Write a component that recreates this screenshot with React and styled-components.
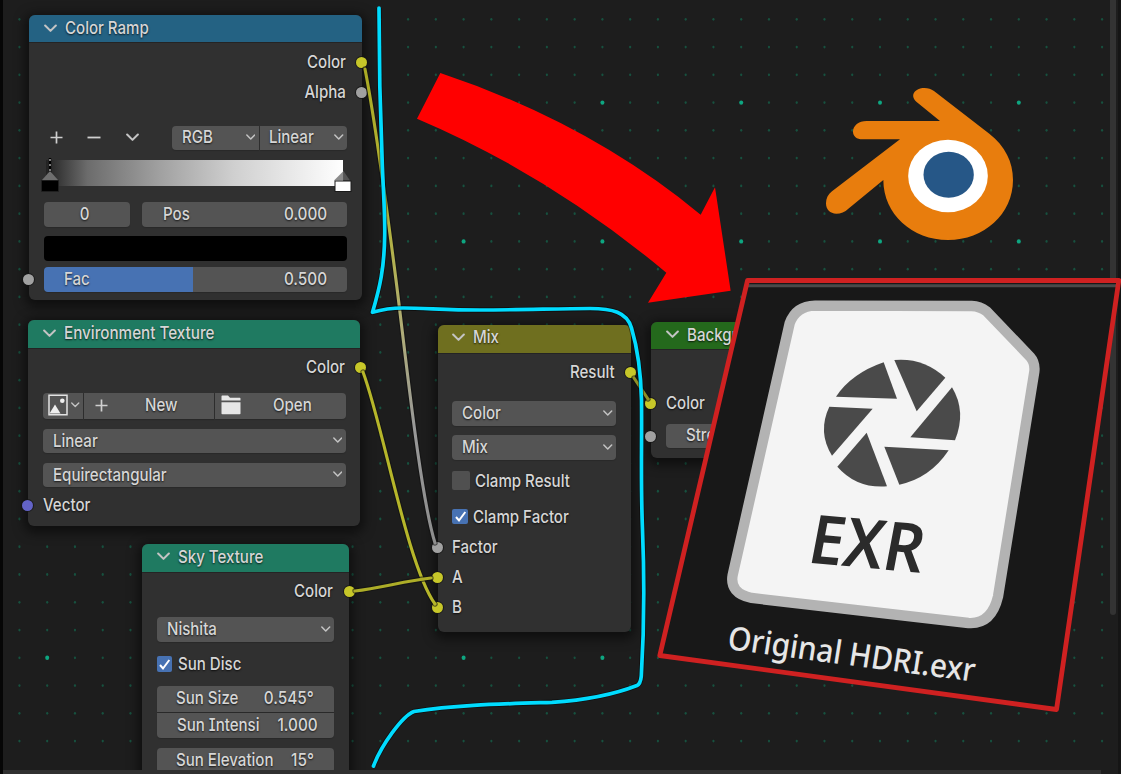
import React from "react";
import styled, { createGlobalStyle, css } from "styled-components";

const GlobalStyle = createGlobalStyle`
  * { box-sizing: border-box; }
  html, body { margin: 0; padding: 0; background: #1d1d1d; overflow: hidden; }
`;

const Editor = styled.main`
  position: relative;
  width: 1121px;
  height: 774px;
  overflow: hidden;
  background: #1d1d1d;
  font-family: Inter, "Liberation Sans", sans-serif;
  font-size: 17.4px;
  font-weight: 500;
  line-height: 24px;
  color: #d6d6d6;
`;

const Layer = styled.svg`
  position: absolute;
  inset: 0;
  width: 1121px;
  height: 774px;
  pointer-events: none;
`;

const Node = styled.section`
  position: absolute;
  left: ${(p) => p.$x}px;
  top: ${(p) => p.$y}px;
  width: ${(p) => p.$w}px;
  height: ${(p) => p.$h}px;
  border-radius: 6px;
  background: #303030;
  box-shadow: 0 3px 11px 4px rgba(0, 0, 0, 0.5);
`;

const Header = styled.header`
  display: flex;
  align-items: center;
  gap: ${(p) => p.$gap ?? 8}px;
  height: ${(p) => p.$h ?? 27}px;
  padding: 0 0 ${(p) => p.$lift ?? 1}px 14.5px;
  border-radius: 6px 6px 0 0;
  background: ${(p) => p.$color};
  box-shadow: 0 1px 0 rgba(0, 0, 0, 0.25);
`;

const Body = styled.div`
  display: flex;
  flex-direction: column;
  padding: ${(p) => p.$top}px 14.5px 0;
`;

const Text = styled.span`
  display: inline-block;
  white-space: nowrap;
  transform: scaleX(${(p) => p.$sx ?? 0.866});
  transform-origin: ${(p) => p.$from ?? "left"} center;
  font-feature-settings: "cv08" 1;
  text-shadow: 0 1px 2px rgba(0, 0, 0, 0.75);
`;

const Row = styled.div`
  display: flex;
  align-items: center;
  position: relative;
  justify-content: ${(p) => (p.$end ? "flex-end" : "flex-start")};
  height: ${(p) => p.$h ?? 30}px;
  margin-top: ${(p) => p.$mt ?? 0}px;
  padding-right: ${(p) => (p.$end ? 1.3 : 0)}px;
  gap: ${(p) => p.$gap ?? 0}px;
`;

const socketColors = { color: "#c7c729", value: "#a1a1a1", vector: "#6363c7" };

const Socket = styled.i`
  position: absolute;
  ${(p) => (p.$side === "right" ? css`right: -20.4px;` : css`left: -20.6px;`)}
  top: calc(50% - 4.8px);
  width: 11px;
  height: 11px;
  border-radius: 50%;
  background: ${(p) => socketColors[p.$kind]};
  box-shadow: 0 0 0 1px rgba(20, 20, 20, 0.75);
`;

const Field = styled.div`
  display: flex;
  align-items: center;
  position: relative;
  justify-content: ${(p) => (p.$center ? "center" : "space-between")};
  flex: ${(p) => p.$flex ?? "1 1 0"};
  height: 100%;
  padding: 0 ${(p) => p.$pr ?? 3}px 1px ${(p) => p.$pl ?? 10}px;
  border-radius: ${(p) => p.$radius ?? "4px"};
  background: ${(p) => p.$bg ?? "#545454"};
  box-shadow: 0 1px 1px rgba(0, 0, 0, 0.15);
`;

const RampControls = styled.div`
  display: flex;
  align-items: center;
  justify-content: space-between;
  width: 128.5px;
  padding: 0 33px 0 6px;
`;

const RampBar = styled.div`
  position: relative;
  height: 26px;
  margin: 10px 4px 0 2px;
  background: linear-gradient(90deg, #222 0%, #3c3c3c 5%, #6c6c6c 14%, #a0a0a0 38%, #cfcfcf 63%, #fff 100%);
`;

const Handles = styled.svg`
  position: absolute;
  left: -5px;
  top: -4px;
  width: 314px;
  height: 40px;
`;

const Swatch = styled.div`
  height: 24.5px;
  margin-top: 9px;
  border-radius: 4px;
  background: #000;
`;

const Stack = styled.div`
  display: flex;
  flex-direction: column;
  gap: 1px;
  height: ${(p) => p.$h}px;
  margin-top: ${(p) => p.$mt}px;
`;

const Check = styled.span`
  display: grid;
  place-items: center;
  width: ${(p) => (p.$on ? 15.5 : 18)}px;
  height: ${(p) => (p.$on ? 15.5 : 18.5)}px;
  border-radius: 2px;
  background: ${(p) => (p.$on ? "#4772b3" : "#505050")};
`;

const VScroll = styled.div`
  position: absolute;
  right: 5px;
  top: 0;
  width: 6px;
  height: 615px;
  border-radius: 0 0 3px 3px;
  background: #333;
`;

const RightEdge = styled.div`
  position: absolute;
  right: 0;
  top: 0;
  width: 3px;
  height: 100%;
  background: #151515;
`;

const HScroll = styled.div`
  position: absolute;
  left: 3px;
  bottom: 0;
  width: 1098px;
  height: 4px;
  background: #303030;
`;

const LeftEdge = styled.div`
  position: absolute;
  left: 0;
  top: 0;
  width: 2.5px;
  height: 100%;
  background: #060606;
`;

const Chevron = ({ w = 12 }) => (
  <svg width={w} height={w * 0.66} viewBox="0 0 12 8" fill="none">
    <path d="M1 1.4 L6 6.4 L11 1.4" stroke="#c4c4c4" strokeWidth="1.9" strokeLinecap="round" strokeLinejoin="round" />
  </svg>
);

const Plus = () => (
  <svg width="13" height="13" viewBox="0 0 13 13">
    <path d="M6.5 0.5V12.5M0.5 6.5H12.5" stroke="#cfcfcf" strokeWidth="1.7" />
  </svg>
);

const Minus = () => (
  <svg width="14" height="13" viewBox="0 0 14 13">
    <path d="M0.5 6.5H13.5" stroke="#cfcfcf" strokeWidth="1.8" />
  </svg>
);

const ImageIcon = () => (
  <svg width="20" height="22" viewBox="0 0 20 22">
    <path d="M1 1.2H19V20.8H1Z" fill="none" stroke="#e2e2e2" strokeWidth="1.5" />
    <path d="M1.5 19.5L7 10.5L12.5 19.5Z" fill="#eee" />
    <circle cx="14.3" cy="6.8" r="2.3" fill="#eee" />
  </svg>
);

const FolderIcon = () => (
  <svg width="20" height="20" viewBox="0 0 20 20">
    <path d="M0.5 1.2Q0.5 0.5 1.2 0.5H7L9 2.7H18.8Q19.5 2.7 19.5 3.4V5.6H0.5Z" fill="#e6e6e6" />
    <path d="M0.5 7.2H19.5V18.5Q19.5 19.3 18.7 19.3H1.3Q0.5 19.3 0.5 18.5Z" fill="#e6e6e6" />
  </svg>
);

const Tick = () => (
  <svg width="13" height="13" viewBox="0 0 13 13" fill="none">
    <path d="M2 7L5 10.5L11.3 2" stroke="#fff" strokeWidth="2" />
  </svg>
);

const Select = ({ label, ...rest }) => (
  <Field $pr={3.5} {...rest}>
    <Text>{label}</Text>
    <Chevron w={9.5} />
  </Field>
);

const Output = ({ label, kind, ...rest }) => (
  <Row $end {...rest}>
    <Text $from="right">{label}</Text>
    <Socket $side="right" $kind={kind} />
  </Row>
);

const STEP = 27.76;
const Dots = () => {
  const dots = [];
  for (let i = -16; i <= 23; i++) {
    for (let j = -3; j <= 23; j++) {
      const major = i % 5 === 0 && j % 5 === 0;
      dots.push(
        <ellipse
          key={`${i}:${j}`}
          cx={463.6 + i * STEP}
          cy={102.6 + j * STEP}
          rx={major ? 2 : 1.1}
          ry={major ? 2.2 : 1.4}
          fill={major ? "#0ea681" : "#17513f"}
        />
      );
    }
  }
  return <Layer>{dots}</Layer>;
};

const Link = ({ d, stroke }) => (
  <g fill="none" strokeLinecap="round">
    <path d={d} stroke="#111" strokeOpacity="0.6" strokeWidth="5.4" />
    <path d={d} stroke={stroke} strokeWidth="3.1" />
  </g>
);

const Links = () => (
  <Layer>
    <defs>
      <linearGradient id="link" gradientUnits="userSpaceOnUse" x1="0" y1="68" x2="0" y2="545">
        <stop offset="0" stopColor="#aaaa24" />
        <stop offset="0.3" stopColor="#b3b336" />
        <stop offset="0.55" stopColor="#b0ad78" />
        <stop offset="0.75" stopColor="#999" />
        <stop offset="1" stopColor="#8d8d8d" />
      </linearGradient>
    </defs>
    <Link d="M365 69C375 120 387 210 396 280S420 495 435 543" stroke="url(#link)" />
    <Link d="M363 372C383 425 407 565 435 604" stroke="#b6b62a" />
    <Link d="M355 591C380 588 405 581 431 578" stroke="#adad28" />
    <Link d="M634 378L648 399" stroke="#8f8f26" />
  </Layer>
);

const BRACKET =
  "M379 8C379 60 380 110 382.3 165C383.5 195 385 212 384.7 235C384.3 268 380 287 372.5 312.3C382 309.5 390 308 403 308C425 308 445 310 480 310C520 310 560 308.5 590 308.5C612 308.6 627 312 631.5 328C638 350 641 378 641.5 400C642 450 640.5 480 642.5 530C644.5 580 643.5 640 641.3 676Q640.5 684 637 685.5C610 696 580 700.5 552 702.3C500 704 455 705 414 711.5C402 716 381 746 373.5 766";

const Annotations = () => (
  <Layer>
    <g fill="none" strokeLinejoin="round">
      <path d={BRACKET} stroke="#000" strokeOpacity="0.45" strokeWidth="5.4" />
      <path d={BRACKET} stroke="#00dcff" strokeWidth="3.7" strokeLinecap="round" />
    </g>
    <g transform="translate(400 50) scale(0.33333)">
      <path d="M121 69Q568 218 902 494L945 412L992 722L744 758L799 668Q445 373 51 206Z" fill="#f00" />
    </g>
    <g transform="translate(800 70) scale(0.33333)">
      <path
        d="M420 153L349 95C328 76 345 54 373 54C385 54 393 57 402 63L568 191C615 228 639 275 639 330C639 432 552 510 444 510C336 510 250 432 250 330L145 416C135 426 122 431 109 431C90 431 78 418 78 400C78 385 84 374 96 364L300 208H188C170 208 159 198 159 185C159 167 176 153 200 153Z"
        fill="#e87d0d"
      />
      <ellipse cx="444" cy="318" rx="119.5" ry="109" fill="#fff" />
      <ellipse cx="446" cy="314" rx="75.5" ry="69" fill="#265787" />
    </g>
  </Layer>
);

const FileCard = () => (
  <Layer>
    <path d="M747.5 280.5H1118.8L1056.5 709.5L659.8 655.5Z" fill="#181818" />
    <path d="M748 285.8H1117" stroke="#494949" strokeWidth="3" />
    <path d="M747.5 280.5H1118.8L1056.5 709.5L659.8 655.5Z" fill="none" stroke="#cf2121" strokeWidth="4.8" strokeLinejoin="round" />
    <g transform="translate(700 270) scale(0.33333)">
      <path
        d="M345 107L815 108Q840 109 860 124L990 260Q1006 278 1003 305L894 980Q874 1064 805 1059L155 984Q88 970 98 915L269 160Q288 108 345 107Z"
        fill="#f4f4f4"
        stroke="#b3b3b3"
        strokeWidth="31"
      />
      <g fill="#4a4a4a">
        <path d="M551 277L591 386L408 380Q455 310 551 277Z" />
        <path d="M583 270Q670 262 736 323L650 424Z" />
        <path d="M756 352Q800 425 765 511L631 502Z" />
        <path d="M553 530L746 541Q690 625 598 644Z" />
        <path d="M500 488L561 649Q470 656 412 590Z" />
        <path d="M388 410L518 416L396 557Q352 485 388 410Z" />
      </g>
    </g>
    <text
      transform="matrix(1 0.09 -0.19 1 806 562.5)"
      x="0"
      y="0"
      fontFamily='"Noto Sans", sans-serif'
      fontWeight="600"
      fontSize="67"
      textLength="114"
      lengthAdjust="spacingAndGlyphs"
      fill="#2b2b2b"
    >
      EXR
    </text>
    <text
      transform="matrix(1 0.132 -0.16 1 726.5 649)"
      x="0"
      y="0"
      fontFamily='"Noto Sans", sans-serif'
      fontSize="32"
      textLength="247"
      lengthAdjust="spacingAndGlyphs"
      fill="#e6e6e6"
    >
      Original HDRI.exr
    </text>
  </Layer>
);

export default function App() {
  return (
    <>
      <GlobalStyle />
      <Editor>
        <Dots />
        <VScroll />
        <RightEdge />

        <Node $x={29} $y={15} $w={332.5} $h={284.5}>
          <Header $color="#246283">
            <Chevron w={13} />
            <Text>Color Ramp</Text>
          </Header>
          <Body $top={5}>
            <Output label="Color" kind="color" />
            <Output label="Alpha" kind="value" />
            <Row $h={24.5} $mt={18.5}>
              <RampControls>
                <Plus />
                <Minus />
                <Chevron w={13} />
              </RampControls>
              <Row $h={24.5} $gap={1}>
                <Select label="RGB" $flex="0 0 86.5px" $radius="4px 0 0 4px" />
                <Select label="Linear" $flex="0 0 87.5px" $pl={9} $radius="0 4px 4px 0" />
              </Row>
            </Row>
            <RampBar>
              <Handles viewBox="0 0 314 40">
                <path d="M9 2V18" stroke="#000" strokeWidth="2.4" />
                <path d="M9 3V18" stroke="#ccc" strokeWidth="1.2" strokeDasharray="2 3" />
                <path d="M1 24L9 15L17 24Z" fill="#6f6f6f" />
                <rect x="0.5" y="24.5" width="17" height="11" fill="#000" stroke="#222" strokeWidth="0.8" />
                <path d="M293 24.5L302.5 15V24.5Z" fill="#8c8c8c" />
                <path d="M302.5 15L309 24.5H302.5Z" fill="#555" />
                <rect x="294" y="25" width="16" height="10.5" fill="#fff" stroke="#1a1a1a" strokeWidth="1" />
              </Handles>
            </RampBar>
            <Row $h={25.5} $mt={15.5} $gap={12}>
              <Field $center $flex="0 0 86.5px" $pl={0} $pr={4}>
                <Text $from="center">0</Text>
              </Field>
              <Field $pl={20.5} $pr={19.5}>
                <Text>Pos</Text>
                <Text $from="right" $sx={0.88}>0.000</Text>
              </Field>
            </Row>
            <Swatch />
            <Row $h={25} $mt={6}>
              <Socket $side="left" $kind="value" />
              <Field $pl={20.5} $pr={19.5} $bg="linear-gradient(90deg, #4772b3 49.3%, #545454 49.3%)">
                <Text>Fac</Text>
                <Text $from="right" $sx={0.88}>0.500</Text>
              </Field>
            </Row>
          </Body>
        </Node>

        <Node $x={28.3} $y={320} $w={332} $h={206}>
          <Header $color="#1f7a61" $h={28} $lift={2}>
            <Chevron w={13} />
            <Text $sx={0.875}>Environment Texture</Text>
          </Header>
          <Body $top={4}>
            <Output label="Color" kind="color" />
            <Row $h={25.5} $mt={11} $gap={1.2}>
              <Field $flex="0 0 40px" $pl={5} $pr={3} $radius="4px 0 0 4px">
                <ImageIcon />
                <Chevron w={8.5} />
              </Field>
              <Field $flex="0 0 130px" $pl={11} $pr={36} $radius="0">
                <Plus />
                <Text $from="right">New</Text>
              </Field>
              <Field $pl={5.5} $pr={34} $radius="0 4px 4px 0">
                <FolderIcon />
                <Text $from="right">Open</Text>
              </Field>
            </Row>
            <Row $h={24.5} $mt={10.3}>
              <Select label="Linear" />
            </Row>
            <Row $h={24.5} $mt={9.5}>
              <Select label="Equirectangular" />
            </Row>
            <Row $mt={2.7}>
              <Socket $side="left" $kind="vector" />
              <Text>Vector</Text>
            </Row>
          </Body>
        </Node>

        <Node $x={142.3} $y={543.5} $w={206.5} $h={240}>
          <Header $color="#1f7a61" $lift={2} $h={28}>
            <Chevron w={13} />
            <Text>Sky Texture</Text>
          </Header>
          <Body $top={4}>
            <Output label="Color" kind="color" />
            <Row $h={25.5} $mt={11}>
              <Select label="Nishita" />
            </Row>
            <Row $mt={7} $gap={6}>
              <Check $on><Tick /></Check>
              <Text>Sun Disc</Text>
            </Row>
            <Stack $h={52} $mt={7.2}>
              <Field $pl={19} $pr={20.5} $radius="4px 4px 0 0">
                <Text>Sun Size</Text>
                <Text $from="right" $sx={0.88}>0.545°</Text>
              </Field>
              <Field $pl={20} $pr={20} $radius="0 0 4px 4px">
                <Text>Sun Intensi</Text>
                <Text $from="right" $sx={0.88}>1.000</Text>
              </Field>
            </Stack>
            <Row $h={25} $mt={10.3}>
              <Field $pl={19} $pr={20}>
                <Text>Sun Elevation</Text>
                <Text $from="right" $sx={0.88}>15°</Text>
              </Field>
            </Row>
          </Body>
        </Node>

        <Node $x={437.8} $y={324.5} $w={192.8} $h={307}>
          <Header $color="#6f6f1f" $h={28} $lift={3}>
            <Chevron w={13} />
            <Text>Mix</Text>
          </Header>
          <Body $top={4.5}>
            <Output label="Result" kind="color" />
            <Row $h={25.5} $mt={13.5}>
              <Select label="Color" />
            </Row>
            <Row $h={25.5} $mt={8.5}>
              <Select label="Mix" />
            </Row>
            <Row $mt={5.5} $gap={5}>
              <Check />
              <Text>Clamp Result</Text>
            </Row>
            <Row $mt={6} $gap={5.5}>
              <Check $on><Tick /></Check>
              <Text>Clamp Factor</Text>
            </Row>
            <Row $mt={0.3}>
              <Socket $side="left" $kind="value" />
              <Text>Factor</Text>
            </Row>
            <Row>
              <Socket $side="left" $kind="color" />
              <Text>A</Text>
            </Row>
            <Row>
              <Socket $side="left" $kind="color" />
              <Text>B</Text>
            </Row>
          </Body>
        </Node>

        <Node $x={651.4} $y={322} $w={190} $h={135.5}>
          <Header $color="#24691c" $lift={2}>
            <Chevron w={13} />
            <Text>Background</Text>
          </Header>
          <Body $top={39}>
            <Row>
              <Socket $side="left" $kind="color" />
              <Text>Color</Text>
            </Row>
            <Row $h={24} $mt={5.5}>
              <Socket $side="left" $kind="value" />
              <Field $pl={20}>
                <Text>Strength</Text>
              </Field>
            </Row>
          </Body>
        </Node>

        <Links />
        <Annotations />
        <FileCard />
        <HScroll />
        <LeftEdge />
      </Editor>
    </>
  );
}
